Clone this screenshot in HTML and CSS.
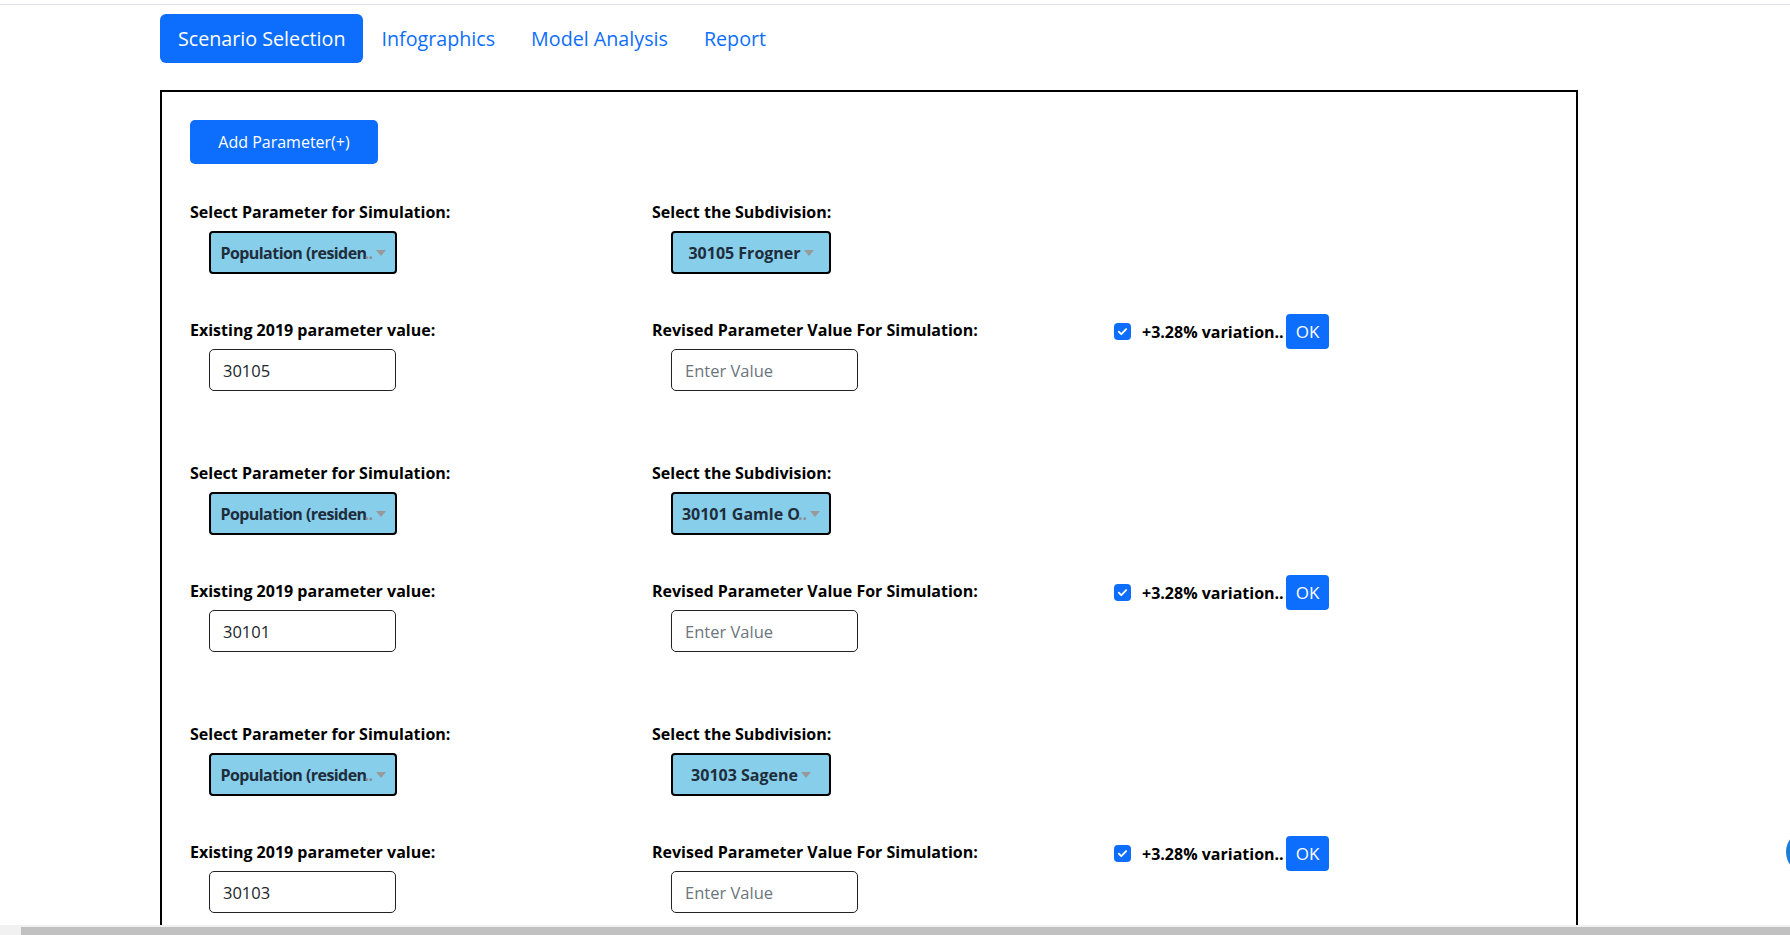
FILE: index.html
```html
<!DOCTYPE html>
<html lang="en">
<head>
<meta charset="utf-8">
<title>Scenario Selection</title>
<link rel="stylesheet" href="styles.css">
</head>
<body>
<div class="topline"></div>
<nav class="tabs">
  <a class="tab active">Scenario Selection</a>
  <a class="tab">Infographics</a>
  <a class="tab">Model Analysis</a>
  <a class="tab">Report</a>
</nav>
<main class="panel">
  <button class="btn-add">Add Parameter(+)</button>

  <section class="group">
    <div class="row">
      <div class="field">
        <div class="lbl">Select Parameter for Simulation:</div>
        <div class="sel sel-wide"><span class="sel-text">Population (residen</span><span class="dots">..</span><span class="caret"></span></div>
      </div>
      <div class="field">
        <div class="lbl">Select the Subdivision:</div>
        <div class="sel sel-narrow"><span class="sel-text">30105 Frogner</span><span class="caret"></span></div>
      </div>
    </div>
    <div class="row row-b">
      <div class="field">
        <div class="lbl">Existing 2019 parameter value:</div>
        <div class="inp">30105</div>
      </div>
      <div class="field">
        <div class="lbl">Revised Parameter Value For Simulation:</div>
        <div class="inp ph">Enter Value</div>
      </div>
      <div class="check-cell">
        <span class="cbox"><svg viewBox="0 0 16 16" width="13" height="13"><path d="M3.5 8.3l3 3 6-6.3" fill="none" stroke="#fff" stroke-width="2.2" stroke-linecap="round" stroke-linejoin="round"/></svg></span>
        <span class="var">+3.28% variation..</span>
        <button class="ok">OK</button>
      </div>
    </div>
  </section>

  <section class="group">
    <div class="row">
      <div class="field">
        <div class="lbl">Select Parameter for Simulation:</div>
        <div class="sel sel-wide"><span class="sel-text">Population (residen</span><span class="dots">..</span><span class="caret"></span></div>
      </div>
      <div class="field">
        <div class="lbl">Select the Subdivision:</div>
        <div class="sel sel-narrow"><span class="sel-text">30101 Gamle O</span><span class="dots">..</span><span class="caret"></span></div>
      </div>
    </div>
    <div class="row row-b">
      <div class="field">
        <div class="lbl">Existing 2019 parameter value:</div>
        <div class="inp">30101</div>
      </div>
      <div class="field">
        <div class="lbl">Revised Parameter Value For Simulation:</div>
        <div class="inp ph">Enter Value</div>
      </div>
      <div class="check-cell">
        <span class="cbox"><svg viewBox="0 0 16 16" width="13" height="13"><path d="M3.5 8.3l3 3 6-6.3" fill="none" stroke="#fff" stroke-width="2.2" stroke-linecap="round" stroke-linejoin="round"/></svg></span>
        <span class="var">+3.28% variation..</span>
        <button class="ok">OK</button>
      </div>
    </div>
  </section>

  <section class="group">
    <div class="row">
      <div class="field">
        <div class="lbl">Select Parameter for Simulation:</div>
        <div class="sel sel-wide"><span class="sel-text">Population (residen</span><span class="dots">..</span><span class="caret"></span></div>
      </div>
      <div class="field">
        <div class="lbl">Select the Subdivision:</div>
        <div class="sel sel-narrow"><span class="sel-text">30103 Sagene</span><span class="caret"></span></div>
      </div>
    </div>
    <div class="row row-b">
      <div class="field">
        <div class="lbl">Existing 2019 parameter value:</div>
        <div class="inp">30103</div>
      </div>
      <div class="field">
        <div class="lbl">Revised Parameter Value For Simulation:</div>
        <div class="inp ph">Enter Value</div>
      </div>
      <div class="check-cell">
        <span class="cbox"><svg viewBox="0 0 16 16" width="13" height="13"><path d="M3.5 8.3l3 3 6-6.3" fill="none" stroke="#fff" stroke-width="2.2" stroke-linecap="round" stroke-linejoin="round"/></svg></span>
        <span class="var">+3.28% variation..</span>
        <button class="ok">OK</button>
      </div>
    </div>
  </section>
</main>
<div class="fab"></div>
<div class="hscroll"><span class="hs-arrow"></span><span class="hs-thumb"></span></div>
</body>
</html>
```
FILE: styles.css
```css
html, body {
  margin: 0;
  padding: 0;
  overflow: hidden;
  background: #fff;
}
body {
  font-family: "Open Sans", "Noto Sans", sans-serif;
  color: #000;
  height: 935px;
}
.topline {
  height: 4px;
  border-bottom: 1px solid #dee2e6;
}
.tabs {
  display: flex;
  margin: 9px 0 0 160px;
}
.tab {
  display: block;
  font-size: 19.7px;
  line-height: 29px;
  padding: 10px 18px;
  color: #0d6efd;
  border-radius: 6px;
  cursor: pointer;
}
.tab.active {
  background: #0d6efd;
  color: #fff;
}
.panel {
  box-sizing: border-box;
  width: 1418px;
  margin: 27px 0 0 160px;
  border: 2px solid #000;
  padding: 28px 0 200px 28px;
}
.btn-add {
  display: block;
  width: 188px;
  height: 44px;
  border: 0;
  border-radius: 5px;
  background: #0d6efd;
  color: #fff;
  font-family: inherit;
  font-size: 16px;
  padding: 0;
}
.group {
  margin-top: 36px;
}
.group + .group {
  margin-top: 70px;
}
.row {
  display: grid;
  grid-template-columns: 462px 462px 462px;
}
.row-b {
  margin-top: 44px;
}
.lbl {
  font-weight: 700;
  font-size: 16px;
  line-height: 24px;
}
.sel {
  box-sizing: border-box;
  margin: 7px 0 0 19px;
  height: 43px;
  border: 2px solid #000;
  border-radius: 4px;
  background: #87ceeb;
  display: flex;
  align-items: center;
  justify-content: center;
  padding: 0 6px 0 6px;
  font-weight: 700;
  font-size: 16px;
  color: #1e2d3b;
  white-space: nowrap;
  overflow: hidden;
}
.sel-wide {
  width: 188px;
  letter-spacing: -0.55px;
}
.sel-narrow {
  width: 160px;
}
.sel-text {
  min-width: 0;
}
.dots {
  color: #8a8f95;
  flex: none;
  margin-left: -2px;
}
.caret {
  flex: none;
  width: 0;
  height: 0;
  margin-left: 3px;
  border-left: 5px solid transparent;
  border-right: 5px solid transparent;
  border-top: 6px solid #999;
}
.inp {
  box-sizing: border-box;
  margin: 7px 0 0 19px;
  width: 187px;
  height: 42px;
  border: 1px solid #222;
  border-radius: 5px;
  padding: 0 13px;
  display: flex;
  align-items: center;
  font-size: 16.5px;
  color: #212529;
}
.inp.ph {
  color: #6c757d;
}
.check-cell {
  display: flex;
  align-items: center;
  height: 35px;
  margin-top: -4px;
}
.cbox {
  box-sizing: border-box;
  width: 17px;
  height: 17px;
  border-radius: 4px;
  background: #0d6efd;
  display: flex;
  align-items: center;
  justify-content: center;
  flex: none;
}
.var {
  margin-left: 11px;
  width: 144px;
  font-weight: 700;
  font-size: 16px;
  white-space: nowrap;
}
.ok {
  width: 43px;
  height: 35px;
  border: 0;
  border-radius: 4px;
  background: #0d6efd;
  color: #fff;
  font-family: inherit;
  font-size: 17px;
  padding: 0;
}
.fab {
  position: fixed;
  left: 1786px;
  top: 830px;
  width: 44px;
  height: 44px;
  border-radius: 50%;
  background: #1a7fd6;
}
.hscroll {
  position: fixed;
  left: 0;
  right: 0;
  bottom: 0;
  height: 10px;
  background: #f1f1f1;
  display: flex;
  align-items: flex-end;
}
.hs-arrow {
  width: 21px;
  height: 8px;
}
.hs-thumb {
  flex: 1;
  height: 8px;
  background: #c1c1c1;
}
```
